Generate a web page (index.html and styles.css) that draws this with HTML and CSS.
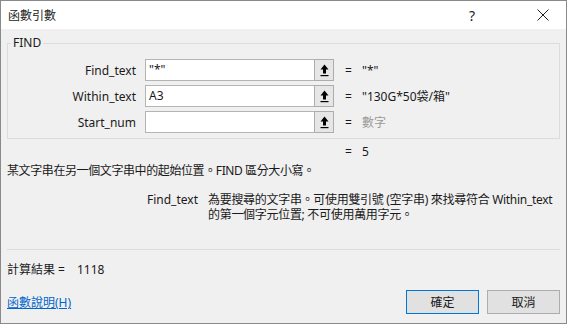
FILE: index.html
```html
<!DOCTYPE html>
<html lang="zh-Hant">
<head>
<meta charset="utf-8">
<title>函數引數</title>
<link rel="stylesheet" href="styles.css">
</head>
<body>
<div class="window">
  <div class="titlebar">
    <span class="title">函數引數</span>
    <span class="help">?</span>
    <span class="close">
      <svg width="12" height="12" viewBox="0 0 12 12"><path d="M0.5 0.5 L11.5 11.5 M11.5 0.5 L0.5 11.5" stroke="#222" stroke-width="1" fill="none"/></svg>
    </span>
  </div>
  <div class="content">
    <fieldset class="group">
      <legend>FIND</legend>
      <div class="args">
        <span class="lbl">Find_text</span>
        <div class="ref"><div class="box">"*"</div><div class="pick"><svg width="9" height="13" viewBox="0 0 9 13"><path d="M4.5 0.5 L8.5 5.5 H6 V9.5 H3 V5.5 H0.5 Z" fill="#000"/><rect x="0.5" y="11" width="8" height="1.2" fill="#000"/></svg></div></div>
        <span class="eq">=</span>
        <span class="val">"*"</span>

        <span class="lbl">Within_text</span>
        <div class="ref"><div class="box">A3</div><div class="pick"><svg width="9" height="13" viewBox="0 0 9 13"><path d="M4.5 0.5 L8.5 5.5 H6 V9.5 H3 V5.5 H0.5 Z" fill="#000"/><rect x="0.5" y="11" width="8" height="1.2" fill="#000"/></svg></div></div>
        <span class="eq">=</span>
        <span class="val">"130G*50袋/箱"</span>

        <span class="lbl">Start_num</span>
        <div class="ref"><div class="box"></div><div class="pick"><svg width="9" height="13" viewBox="0 0 9 13"><path d="M4.5 0.5 L8.5 5.5 H6 V9.5 H3 V5.5 H0.5 Z" fill="#000"/><rect x="0.5" y="11" width="8" height="1.2" fill="#000"/></svg></div></div>
        <span class="eq">=</span>
        <span class="val muted">數字</span>
      </div>
    </fieldset>
    <div class="result"><span class="eq">=</span><span class="val">5</span></div>
    <div class="desc">某文字串在另一個文字串中的起始位置。FIND 區分大小寫。</div>
    <div class="argdesc">
      <span class="argname">Find_text</span>
      <span class="argtext">為要搜尋的文字串。可使用雙引號 (空字串) 來找尋符合 Within_text 的第一個字元位置; 不可使用萬用字元。</span>
    </div>
    <div class="sep"></div>
    <div class="calc"><span class="calc-label">計算結果 =</span><span class="calc-val">1118</span></div>
    <div class="footer">
      <a class="help-link" href="#">函數說明(H)</a>
      <div class="buttons">
        <button class="btn default">確定</button>
        <button class="btn">取消</button>
      </div>
    </div>
  </div>
</div>
</body>
</html>
```
FILE: styles.css
```css
* { box-sizing: border-box; }
html, body { margin: 0; padding: 0; }
body {
  font-family: "Segoe UI", "Noto Sans", "Noto Sans CJK TC", sans-serif;
  font-size: 12px;
  color: #1a1a1a;
  background: #f0f0f0;
}
.window {
  width: 567px;
  height: 324px;
  border: 1px solid #8a8a8a;
  background: #f0f0f0;
  display: flex;
  flex-direction: column;
}
.titlebar {
  height: 28px;
  background: #fff;
  display: flex;
  align-items: center;
  padding-left: 7px;
}
.title { font-size: 12px; color: #222; flex: 1; }
.help { font-size: 14px; color: #222; margin-right: 62px; }
.close { display: flex; margin-right: 17px; }
.content {
  padding: 6px 6px 0 6px;
  display: flex;
  flex-direction: column;
}
.group {
  margin: 0;
  padding: 0 0 5px 0;
  border: 1px solid #dcdcdc;
  min-width: 0;
}
.group legend {
  margin-left: 3px;
  padding: 0 2px;
  line-height: 16px;
  font-size: 12px;
}
.args {
  margin-top: 8px;
  display: grid;
  grid-template-columns: 137px 189px 28px 1fr;
  grid-auto-rows: 22px;
  row-gap: 4px;
  align-items: center;
}
.lbl { text-align: right; padding-right: 9px; }
.ref { display: flex; height: 22px; }
.box {
  flex: 1;
  background: #fff;
  border: 1px solid #b4b4b4;
  border-right: none;
  padding: 1px 3px;
  line-height: 18px;
}
.pick {
  width: 20px;
  background: #e6e6e6;
  border: 1px solid #adadad;
  display: flex;
  align-items: center;
  justify-content: center;
}
.eq { padding-left: 11px; }
.muted { color: #9a9a9a; }
.result {
  margin-top: 5px;
  line-height: 16px;
  display: grid;
  grid-template-columns: 338px 17px 1fr;
}
.result .eq { grid-column: 2; padding-left: 0; }
.desc { margin-top: 3px; line-height: 16px; letter-spacing: -0.4px; }
.argdesc {
  margin-top: 13px;
  display: grid;
  grid-template-columns: 191px 1fr;
  line-height: 15px;
}
.argname { text-align: right; }
.argtext { padding-left: 10px; letter-spacing: -0.3px; }
.sep {
  margin-top: 27px;
  height: 1px;
  background: #dcdcdc;
}
.calc { margin-top: 12px; line-height: 16px; display: flex; }
.calc-label { width: 70px; }
.footer {
  margin-top: 12px;
  display: flex;
  align-items: center;
  justify-content: space-between;
}
.help-link { color: #0066cc; text-decoration: underline; }
.buttons { display: flex; gap: 8px; }
.btn {
  width: 73px;
  height: 24px;
  font: inherit;
  color: #1a1a1a;
  background: #e1e1e1;
  border: 1px solid #adadad;
  padding: 0;
}
.btn.default { border-color: #0078d7; }
```
